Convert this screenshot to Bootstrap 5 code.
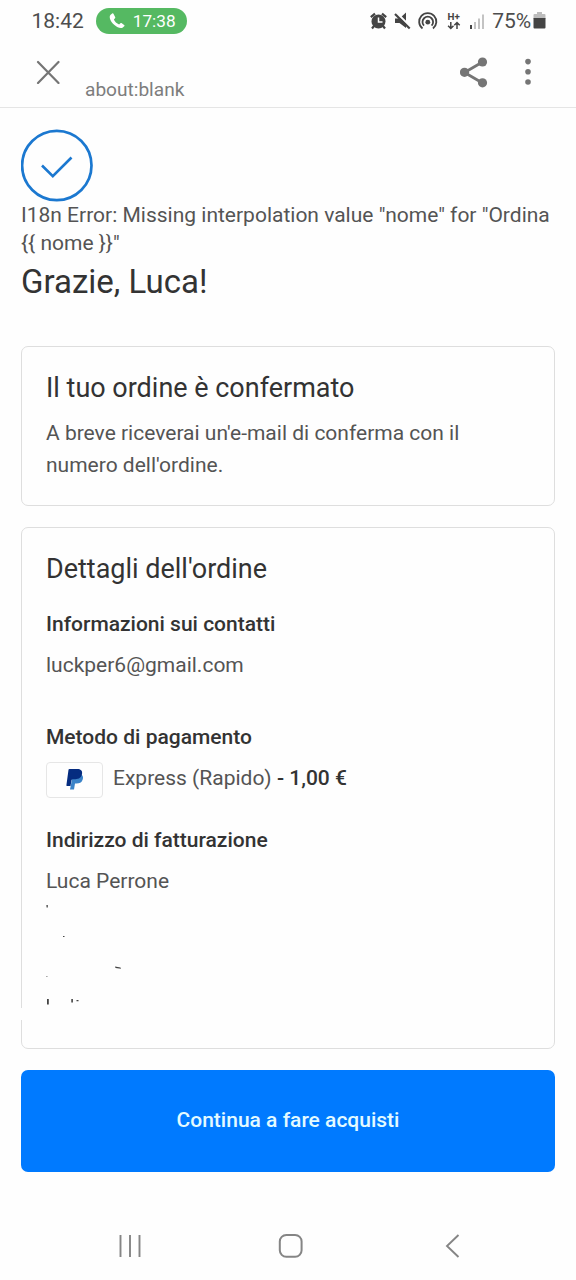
<!DOCTYPE html>
<html lang="it">
<head>
<meta charset="utf-8">
<meta name="viewport" content="width=device-width, initial-scale=1">
<title>Grazie, Luca!</title>
<link href="https://cdn.jsdelivr.net/npm/bootstrap@5.3.0/dist/css/bootstrap.min.css" rel="stylesheet">
<style>
body{font-family:Roboto,sans-serif;font-size:21px;color:#545454;background:#fefefe;line-height:32px}
svg{display:block;flex:none}
h1,h2,h3,p{margin:0}
h1,h2,h3,.ink{color:#333}
.ink{font-weight:500}
.statusbar{height:42px;padding:0 30px 0 31.5px;font-size:21px;color:#4d4d4d}
.callpill{width:91px;height:26px;background:#55b962;font-size:17.2px;line-height:26px;margin-left:12.5px;padding-left:12.5px}
.network{margin-right:5px}
.battery{margin-left:2px}
.percent{letter-spacing:-.1px}
.browserbar{height:66px;border-bottom:1px solid #e5e5e5;padding:0 43px 0 36px}
.close-icon{margin-top:18px}
.share-icon{margin-top:14px}
.more-icon{margin:15px 0 0 35px}
.address{font-size:19.1px;color:#7d7d7d;padding:32px 0 0 25px}
main{padding:21px 21px 0}
.notice{line-height:28px;margin-top:-1px}
h1{font-size:33px;line-height:40px;font-weight:400;margin-top:5px}
.panel{border:1px solid #dedede;border-radius:7px;background:#fefefe;padding:0 24px}
.panel h2{font-size:26.98px;line-height:36px;font-weight:400}
.panel h3{font-size:21px;line-height:32px;font-weight:500;margin-bottom:9px}
.first{height:160px;margin-top:44px;padding-top:23px}
.first p{margin-top:11px}
.second{height:522px;margin-top:21px;padding-top:23px}
.panel .h-contact{margin-top:21px}
.panel .h-payment{margin-top:40px}
.panel .h-billing{margin-top:26px}
.paybox{width:57px;height:36px;border:1px solid #e6e6e6;border-radius:4px}
.paybox svg{margin-top:-2px}
.paytext{margin:-4px 0 0 10px}
.gap-cover{left:-2px;top:480px;width:4px;height:12px;background:#fefefe}
.shop{height:102px;margin-top:21px;border-radius:7px;background:#007aff;border:0;color:#e3faff;font-size:21px;font-weight:500;padding:0 0 1px}
.navkeys{margin-top:60px;padding:0 115px 0 118px}
.home-key{margin-left:-6px}
</style>
</head>
<body>
<div class="statusbar d-flex align-items-center">
  <span>18:42</span>
  <span class="callpill rounded-pill text-white d-flex align-items-center">
    <svg width="16" height="16" viewBox="0 0 16 16"><path d="M3.200.6 1.600 1.700C-.2 3.200.8 7.200 4 10.700c3.600 3.700 7.700 5.300 9.800 3.900l1.400-1.300c.5-.5.4-1-.1-1.400l-2.300-1.700c-.5-.4-1-.3-1.400.1l-1.300 1.100C7.800 10.800 5.700 8.500 4.900 6.600l1.100-1.300c.4-.4.4-.9.1-1.400L4.600.9C4.300.3 3.700.2 3.200.6z" fill="#fff"/></svg>
    <span class="ps-2">17:38</span>
  </span>
  <div class="ms-auto d-flex align-items-center">
    <svg class="network" width="117" height="22" viewBox="0 0 117 22">
      <g fill="#444"><circle cx="8.500" cy="11.500" r="7"/><path d="M.8 7.200 5 3.700M12 3.700l4.200 3.500M4 16l-2 2.500M13 16l2 2.500" stroke="#444" stroke-width="2.200"/></g>
      <path d="M8.500 7.500v4.500h4" fill="none" stroke="#fff" stroke-width="1.500"/>
      <path d="M25 8.500h4.500l6.500-6v15.500l-6.500-5H25z" fill="#444"/><path d="m25.800 2 16 16" stroke="#fefefe" stroke-width="2.200"/><path d="m25 4 14.700 14.500" stroke="#444" stroke-width="2.200"/>
      <g fill="none" stroke="#444" stroke-width="1.800"><path d="M52.500 18.500a8.600 8.600 0 1 1 10.500 0"/><path d="M54 15.700a5.300 5.300 0 1 1 7.600 0"/></g><circle cx="57.800" cy="12.200" r="2.400" fill="#444"/>
      <text x="77.500" y="10.300" font-size="9.800" font-weight="700" fill="#444">H+</text>
      <path d="M80.800 12v6.500m-2.700-2.700 2.700 2.700 2.700-2.700M87 19v-6.500m-2.700 2.700 2.700-2.700 2.700 2.700" fill="none" stroke="#444" stroke-width="1.500"/>
      <path d="M101 15v4" stroke="#444" stroke-width="2"/><path d="M105 12v7M109 8.500V19M113 4.500V19" stroke="#bdbdbd" stroke-width="1.800"/>
    </svg>
    <span class="percent">75%</span>
    <svg class="battery" width="13" height="18" viewBox="0 0 13 18"><path d="M4 0h5v2h2.500a1 1 0 0 1 1 1v4H.5V3a1 1 0 0 1 1-1H4z" fill="#bdbdbd"/><path d="M.5 6h12v9.500a1 1 0 0 1-1 1h-10a1 1 0 0 1-1-1z" fill="#444"/></svg>
  </div>
</div>
<header class="browserbar d-flex">
  <svg class="close-icon" width="24" height="24" viewBox="0 0 24 24"><path d="m2 2 20.500 21M22.500 2 2 23" fill="none" stroke="#757575" stroke-width="2.200" stroke-linecap="round"/></svg>
  <span class="address">about:blank</span>
  <svg class="share-icon ms-auto" width="28" height="32" viewBox="0 0 28 32"><path d="M22.500 6 4.500 16.500 22.500 27" fill="none" stroke="#757575" stroke-width="2.800"/><g fill="#757575"><circle cx="22.500" cy="6" r="4.600"/><circle cx="4.500" cy="16.300" r="4.600"/><circle cx="22.500" cy="26.800" r="4.600"/></g></svg>
  <svg class="more-icon" width="10" height="30" viewBox="0 0 10 30"><g fill="#757575"><circle cx="5" cy="4.600" r="2.800"/><circle cx="5" cy="14.800" r="2.800"/><circle cx="5" cy="25" r="2.800"/></g></svg>
</header>
<main>
  <svg width="72" height="73" viewBox="0 0 72 73"><circle cx="35.800" cy="36.500" r="34.700" fill="none" stroke="#1b78d0" stroke-width="2.700"/><path d="m21 36.500 10.800 10.700L50.500 28.500" fill="none" stroke="#1b78d0" stroke-width="2.600"/></svg>
  <p class="notice text-nowrap">I18n Error: Missing interpolation value "nome" for "Ordina<br>{{ nome }}"</p>
  <h1>Grazie, Luca!</h1>
  <section class="panel first">
    <h2>Il tuo ordine è confermato</h2>
    <p>A breve riceverai un'e-mail di conferma con il<br>numero dell'ordine.</p>
  </section>
  <section class="panel second position-relative">
    <span class="gap-cover position-absolute"></span>
    <h2>Dettagli dell'ordine</h2>
    <h3 class="h-contact">Informazioni sui contatti</h3>
    <p>luckper6@gmail.com</p>
    <h3 class="h-payment">Metodo di pagamento</h3>
    <div class="d-flex align-items-center">
      <span class="paybox d-flex align-items-center justify-content-center">
        <svg width="18" height="21" viewBox="0 0 18 21"><path d="M7 5h7.500c2.800 1.500 3 4 2 6-1 2.600-3 3.500-6 3.500H9L8 20.500H4z" fill="#3b83c8"/><path d="M3.500 0h8c3 0 5 1.600 4.600 4.600-.5 3.800-3 5.700-7 5.700H6.700c-.7 0-1 .4-1.200 1l-1 5.700H1c-.5 0-.7-.3-.6-.8L2.500.8c.1-.5.4-.8 1-.8z" fill="#052c80"/></svg>
      </span>
      <span class="paytext text-nowrap">Express (Rapido) <span class="ink">- 1,00 €</span></span>
    </div>
    <h3 class="h-billing">Indirizzo di fatturazione</h3>
    <p>Luca Perrone</p>
    <svg width="90" height="110" viewBox="0 0 90 110" fill="#444"><path d="M.4 8h1.400v2.500H.6zM17 39h1.500v1H17zM69 69.500l5.500.9.500 1.300-5.500-.6zM.4 79.300h1v.8h-1zM1 102h1.800v5.500H1zM25.300 102h1.600v3.500h-1.600zM30.500 103h2v1.300h-2z"/></svg>
  </section>
  <button class="shop btn w-100 d-block">Continua a fare acquisti</button>
</main>
<footer class="navkeys d-flex align-items-center justify-content-between">
  <svg width="24" height="28" viewBox="0 0 24 28"><path d="M2.500 3v22M12 3v22M21.500 3v22" stroke="#858585" stroke-width="1.900"/></svg>
  <svg class="home-key" width="26" height="28" viewBox="0 0 26 28"><rect x="1.800" y="3" width="21.800" height="21.800" rx="6.500" fill="none" stroke="#858585" stroke-width="2"/></svg>
  <svg width="16" height="28" viewBox="0 0 16 28"><path d="M13.500 3 2 14l11.500 11" fill="none" stroke="#858585" stroke-width="1.900"/></svg>
</footer>
<script src="https://cdn.jsdelivr.net/npm/bootstrap@5.3.0/dist/js/bootstrap.bundle.min.js"></script>
</body>
</html>
